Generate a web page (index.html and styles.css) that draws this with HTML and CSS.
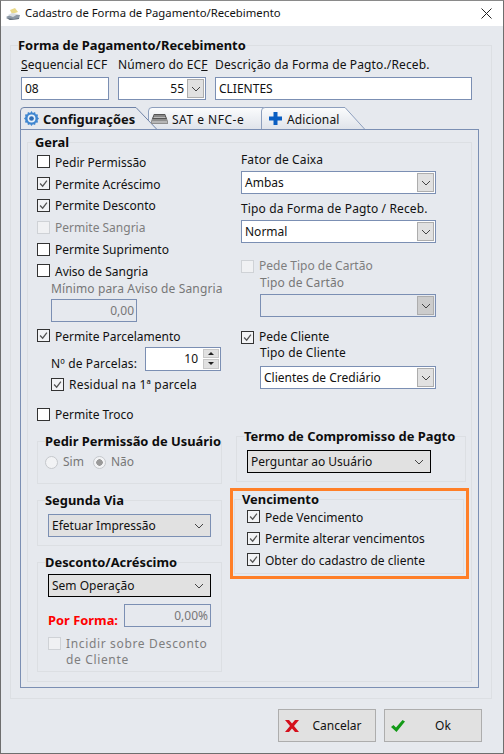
FILE: index.html
```html
<!DOCTYPE html>
<html lang="pt-BR">
<head>
<meta charset="utf-8">
<title>Cadastro de Forma de Pagamento/Recebimento</title>
<link rel="stylesheet" href="styles.css">
</head>
<body>
<svg class="defs" aria-hidden="true">
  <symbol id="chev" viewBox="0 0 12 8"><path d="M2 2l4 4 4-4" fill="none" stroke="currentColor" stroke-width="1"/></symbol>
  <symbol id="tick" viewBox="0 0 13 13"><path d="M2.5 6.5l3 3.2 5-6.5" fill="none" stroke="#555" stroke-width="1.5"/></symbol>
</svg>
<div class="window">
  <div class="titlebar">
    <svg class="appicon" viewBox="0 0 16 14"><path d="M1 10l6-3 8 1-1 4-9 1z" fill="#8d99a6"/><path d="M5 3l5-2 3 4-6 2z" fill="#e9d98a"/><path d="M3 8l4-2 6 1-5 3z" fill="#d8dde2"/><path d="M1 11l8 1 5-1v1l-9 1z" fill="#5d6a78"/></svg>
    <span class="title">Cadastro de Forma de Pagamento/Recebimento</span>
    <svg class="close" viewBox="0 0 11 11"><path d="M.5.5l10 10M10.500.5l-10 10" stroke="#222" stroke-width="1" fill="none"/></svg>
  </div>
  <fieldset class="group outer">
    <legend>Forma de Pagamento/Recebimento</legend>
    <div class="toprow">
      <div class="field w88"><label class="lbl"><u>S</u>equencial ECF</label><div class="input">08</div></div>
      <div class="field w88"><label class="lbl">Número do EC<u>F</u></label>
        <div class="select right"><span class="val">55</span><span class="dd"><svg class="chev"><use href="#chev"/></svg></span></div></div>
      <div class="field w257"><label class="lbl">Descrição da Forma de Pagto./Receb.</label><div class="input">CLIENTES</div></div>
    </div>
    <div class="tabs">
      <svg class="tabshape" viewBox="0 0 346 23" width="346" height="23">
        <defs><linearGradient id="tg" x1="0" y1="0" x2="0" y2="1"><stop offset="0" stop-color="#fbfcfd"/><stop offset="1" stop-color="#dfe3ea"/></linearGradient></defs>
        <path d="M128.500 22.500V4q0-3.500 3.500-3.500h112l21 22z" fill="url(#tg)" stroke="#8d9fbd"/>
        <path d="M241.500 22.500V4q0-3.500 3.500-3.500h80l20 22z" fill="url(#tg)" stroke="#8d9fbd"/>
        <path d="M.5 23V4Q.5.500 4 .500h112l22 22.500z" fill="#e6e9ee"/>
        <path d="M.5 23V4Q.5.500 4 .500h112l21 22" fill="none" stroke="#6f83a8" stroke-width="1"/>
      </svg>
      <div class="tab active tab1">
        <svg class="ticon" viewBox="0 0 16 16"><path d="M8 0l1.500 2 2.300-.9.600 2.400 2.500.3-.4 2.500L16 8l-1.500 1.700.4 2.500-2.500.3-.6 2.400-2.300-.9L8 16l-1.500-2-2.300.9-.6-2.400-2.500-.3.4-2.500L0 8l1.500-1.700-.4-2.500 2.500-.3.6-2.400 2.300.9z" fill="#3f86d0"/><circle cx="8" cy="8" r="4.200" fill="#e8f1fa"/><circle cx="8" cy="8" r="2.500" fill="#2f6db5"/></svg>
        <span>Configurações</span>
      </div>
      <div class="tab tab2">
        <svg class="ticon wide" viewBox="0 0 17 12"><path d="M3 1h11l3 7v3H0V8z" fill="#8f8f8f"/><path d="M3 1h11l2 5H1z" fill="#555"/><path d="M3 3h11M2.500 4.500h12" stroke="#bbb"/><path d="M1 9h15" stroke="#ddd"/></svg>
        <span>SAT e NFC-e</span>
      </div>
      <div class="tab tab3">
        <svg class="ticon" viewBox="0 0 13 13"><path d="M4.500 0h4v4.500H13v4H8.500V13h-4V8.500H0v-4h4.500z" fill="#0a5ec2"/></svg>
        <span>Adicional</span>
      </div>
    </div>
    <div class="panel">
      <fieldset class="group geral">
        <legend>Geral</legend>
        <div class="cols">
          <div class="col left">
            <div class="check first"><span class="box"></span>Pedir Permissão</div>
            <div class="check on"><span class="box"><svg><use href="#tick"/></svg></span>Permite Acréscimo</div>
            <div class="check on"><span class="box"><svg><use href="#tick"/></svg></span>Permite Desconto</div>
            <div class="check off"><span class="box"></span>Permite Sangria</div>
            <div class="check"><span class="box"></span>Permite Suprimento</div>
            <div class="check"><span class="box"></span>Aviso de Sangria</div>
            <div class="lbl dim sub m-min">Mínimo para Aviso de Sangria</div>
            <div class="input disabled sub minimo">0,00</div>
            <div class="check on m3"><span class="box"><svg><use href="#tick"/></svg></span>Permite Parcelamento</div>
            <div class="sub parcelas">
              <span class="lbl parcelas-lbl">Nº de Parcelas:</span>
              <div class="spin"><span class="val">10</span><span class="arrows"><i class="up"></i><i class="down"></i></span></div>
            </div>
            <div class="check on sub m3 residual"><span class="box"><svg><use href="#tick"/></svg></span>Residual na 1ª parcela</div>
            <div class="check m8"><span class="box"></span>Permite Troco</div>
            <fieldset class="group inner m8 h-perm">
              <legend>Pedir Permissão de Usuário</legend>
              <div class="radios dim">
                <span class="radio"></span><span>Sim</span>
                <span class="radio sel"></span><span>Não</span>
              </div>
            </fieldset>
            <fieldset class="group inner m8 h-seg">
              <legend>Segunda Via</legend>
              <div class="select flat m6"><span class="val">Efetuar Impressão</span><svg class="chev"><use href="#chev"/></svg></div>
            </fieldset>
            <fieldset class="group inner m8 h-desc">
              <legend>Desconto/Acréscimo</legend>
              <div class="select flat black m4"><span class="val">Sem Operação</span><svg class="chev"><use href="#chev"/></svg></div>
              <div class="porforma">
                <span class="red">Por Forma:</span>
                <div class="input disabled pct">0,00%</div>
              </div>
              <div class="check off multi"><span class="box"></span><span>Incidir sobre Desconto de Cliente</span></div>
            </fieldset>
          </div>
          <div class="col right-col">
            <div class="lbl indent m1">Fator de Caixa</div>
            <div class="select w195 m4 indent"><span class="val">Ambas</span><span class="dd"><svg class="chev"><use href="#chev"/></svg></span></div>
            <div class="lbl indent m6">Tipo da Forma de Pagto / Receb.</div>
            <div class="select w195 m4 indent"><span class="val">Normal</span><span class="dd"><svg class="chev"><use href="#chev"/></svg></span></div>
            <div class="check off short indent m15"><span class="box"></span>Pede Tipo de Cartão</div>
            <div class="lbl dim indent2">Tipo de Cartão</div>
            <div class="select disabled w176 m4 indent2"><span class="dd"><svg class="chev"><use href="#chev"/></svg></span></div>
            <div class="check on short tight indent m13"><span class="box"><svg><use href="#tick"/></svg></span>Pede Cliente</div>
            <div class="lbl indent2 up1">Tipo de Cliente</div>
            <div class="select w176 m6 indent2"><span class="val">Clientes de Crediário</span><span class="dd"><svg class="chev"><use href="#chev"/></svg></span></div>
            <fieldset class="group inner termo">
              <legend>Termo de Compromisso de Pagto</legend>
              <div class="select flat black m6 w184"><span class="val">Perguntar ao Usuário</span><svg class="chev"><use href="#chev"/></svg></div>
            </fieldset>
            <div class="highlight">
              <fieldset class="group inner venc">
                <legend>Vencimento</legend>
                <div class="check on first-venc"><span class="box"><svg><use href="#tick"/></svg></span>Pede Vencimento</div>
                <div class="check on"><span class="box"><svg><use href="#tick"/></svg></span>Permite alterar vencimentos</div>
                <div class="check on"><span class="box"><svg><use href="#tick"/></svg></span>Obter do cadastro de cliente</div>
              </fieldset>
            </div>
          </div>
        </div>
      </fieldset>
    </div>
  </fieldset>
  <div class="actions">
    <button class="btn"><svg class="bicon" viewBox="0 0 14 12"><path d="M0 0h4l3 3.500L10 0h4L9 6l5 6h-4L7 8.500 4 12H0l5-6z" fill="#d5101c"/></svg><span>Cancelar</span></button>
    <button class="btn"><svg class="bicon" viewBox="0 0 14 12"><path d="M0 7l2.500-2 2.500 2.500L11.500 0 14 1.500 5.500 12z" fill="#139a17"/></svg><span>Ok</span></button>
  </div>
</div>
</body>
</html>
```

FILE: styles.css
```css
* { box-sizing: border-box; }
html, body { margin: 0; padding: 0; }
body {
  width: 504px;
  height: 754px;
  overflow: hidden;
  font-family: "Noto Sans", "DejaVu Sans", sans-serif;
  font-size: 12px;
  line-height: 16px;
  color: #111;
}
.defs { position: absolute; width: 0; height: 0; }
.window {
  width: 504px;
  height: 754px;
  background: #e6e9ee;
  border: 1px solid #6e6e6e;
  border-top-color: #8a8a8a;
}
.titlebar {
  height: 25px;
  background: #fff;
  display: flex;
  align-items: center;
  padding: 0 11px 0 4px;
}
.appicon { width: 16px; height: 14px; margin-right: 4px; }
.title { flex: 1; font-size: 11.3px; padding-bottom: 2px; }
.close { width: 11px; height: 11px; }

.group {
  margin: 0;
  padding: 0;
  border: 1px solid #dcdfe3;
  min-width: 0;
}
.group > legend {
  padding: 0;
  font-size: 12.9px;
  font-weight: 700;
  line-height: 16px;
  height: 16px;
  white-space: nowrap;
  color: #0d0d0d;
}
.outer {
  margin: 11px 0 0 9px;
  width: 482px;
  height: 662px;
  padding: 3px 0 0 10px;
}
.outer > legend { margin-left: -3px; }
.toprow { display: flex; gap: 9px; }
.field { display: flex; flex-direction: column; gap: 5px; }
.w88 { width: 88px; }
.w257 { width: 257px; }
.lbl {
  display: block;
  height: 16px;
  line-height: 18px;
  letter-spacing: .13px;
  white-space: nowrap;
}
.input {
  height: 23px;
  background: #fff;
  border: 1px solid #7b8fb3;
  line-height: 21px;
  padding: 0 3px;
  font-size: 12px;
}
.input.disabled { background: #e6e9ee; color: #777; text-align: right; padding-right: 2px; }
.select {
  display: flex;
  align-items: center;
  justify-content: space-between;
  height: 23px;
  background: #fff;
  border: 1px solid #7b8fb3;
  padding: 0 1px 0 3px;
  line-height: 21px;
}
.select.right .val { flex: 1; text-align: right; padding-right: 3px; }
.select.disabled { background: #e6e9ee; justify-content: flex-end; }
.select.disabled .dd { background: #ccc; color: #999; }
.dd {
  width: 17px;
  height: 19px;
  background: #e1e1e1;
  border: 1px solid #adadad;
  display: flex;
  align-items: center;
  justify-content: center;
  color: #444;
}
.chev { width: 12px; height: 8px; color: #444; }
.select.flat { background: #e1e1e1; padding: 0 5px 0 3px; }
.select.black { border-color: #000; }
.w195 { width: 195px; }
.w176 { width: 176px; }
.w184 { width: 184px; }

.tabs {
  position: relative;
  display: flex;
  height: 23px;
  margin: 7px 0 0 -1px;
}
.tabshape { position: absolute; left: 0; top: 0; }
.tab {
  position: relative;
  display: flex;
  align-items: center;
  height: 23px;
  white-space: nowrap;
}
.tab span { padding-top: 2px; }
.tab1 { width: 128px; padding-left: 4px; font-size: 12.9px; font-weight: 700; }
.tab1 span { padding-top: 0; }
.tab2 { width: 113px; padding-left: 3px; gap: 4px; letter-spacing: .5px; }
.tab3 { padding-left: 8px; gap: 5px; letter-spacing: .1px; }
.tab1 .ticon { margin-right: 4px; }
.ticon { width: 15px; height: 15px; }
.ticon.wide { width: 17px; height: 12px; }
.tab3 .ticon { width: 13px; height: 13px; }

.panel {
  width: 459px;
  height: 559px;
  margin: -1px 0 0 -1px;
  border: 1px solid #7b8fb3;
  padding: 4px 0 0 6px;
  position: relative;
}
.geral {
  width: 445px;
  height: 548px;
  padding-left: 9px;
}
.geral > legend { margin-left: -2px; }
.cols { display: flex; gap: 14px; }
.col { display: flex; flex-direction: column; }
.left { width: 185px; }
.right-col { width: 233px; }

.check {
  display: flex;
  align-items: center;
  gap: 5px;
  height: 21.8px;
  padding-top: 2px;
  white-space: nowrap;
}
.check .box {
  flex: none;
  width: 13px;
  height: 13px;
  margin-top: -2px;
  border: 1px solid #333;
  background: #fff;
  display: block;
}
.check .box svg { display: block; width: 11px; height: 11px; }
.check.on .box { background: #f2f3f5; }
.check.off { color: #7e7e7e; }
.check.off .box { background: #f0f1f3; border-color: #cfd2d6; }
.check.short { height: 16px; line-height: 16px; padding-top: 0; }
.check.short .box { margin-top: 0; }
.check.tight { height: 14px; line-height: 14px; }
.check.first { margin-top: 1px; }
.check.multi {
  align-items: flex-start;
  height: 33px;
  margin-top: 8px;
  padding-top: 0;
  white-space: normal;
  width: 163px;
  letter-spacing: .65px;
}
.check.multi .box { margin-top: 1px; }
.residual { letter-spacing: .2px; }
.dim { color: #777; }
.sub { margin-left: 14px; }
.m-min { margin-top: -2px; }
.minimo { width: 86px; margin-top: 3px; }
.m1 { margin-top: 1px; }
.m3 { margin-top: 3px; }
.m4 { margin-top: 4px; }
.m6 { margin-top: 6px; }
.m7 { margin-top: 7px; }
.m8 { margin-top: 8px; }
.m13 { margin-top: 13px; }
.m15 { margin-top: 15px; }
.parcelas {
  display: flex;
  align-items: flex-start;
  justify-content: space-between;
  height: 24px;
  padding-right: 1px;
}
.parcelas-lbl { margin-top: 8px; }
.spin {
  width: 76px;
  height: 24px;
  background: #fff;
  border: 1px solid #7b8fb3;
  display: flex;
  align-items: center;
  justify-content: flex-end;
  padding-right: 1px;
}
.spin .val { padding-right: 5px; }
.arrows { display: flex; flex-direction: column; width: 16px; height: 20px; gap: 1px; }
.arrows i { flex: 1; background: #e1e1e1; border: 1px solid #c8c8c8; display: flex; align-items: center; justify-content: center; }
.arrows i::after { content: ""; border-left: 3px solid transparent; border-right: 3px solid transparent; }
.up::after { border-bottom: 3px solid #222; }
.down::after { border-top: 3px solid #222; }

.inner { width: 185px; padding: 0 10px; }
.inner > legend { margin-left: -3px; }
.h-perm { height: 51px; }
.h-seg { height: 54px; }
.h-desc { height: 118px; }
.radios { display: flex; align-items: center; height: 16px; margin: 5px 0 0 -3px; }
.radio {
  width: 13px;
  height: 13px;
  border-radius: 50%;
  background: #f2f3f5;
  border: 1px solid #c5c8cc;
  margin-right: 5px;
}
.radio.sel {
  margin-left: 9px;
  background: radial-gradient(circle, #9a9a9a 0 3px, #f2f3f5 3.500px);
}
.porforma { display: flex; align-items: flex-start; justify-content: space-between; margin-top: 7px; }
.red { color: #ff0000; font-size: 12.9px; font-weight: 700; margin-top: 8px; }
.pct { width: 87px; }

.indent { margin-left: 5px; }
.indent2 { margin-left: 24px; }
.up1 { line-height: 17px; }
.termo { width: 230px; margin-top: 39px; height: 54px; }
.highlight {
  width: 239px;
  height: 91px;
  margin: 6px 0 0 -6px;
  border: 3px solid #ff7f27;
  padding-left: 1px;
}
.venc { width: 230px; height: 83px; padding: 0 12px; }
.venc > legend { margin-left: -5px; }
.venc .check { height: 21.5px; }
.first-venc { margin-top: -1px; }

.actions {
  display: flex;
  justify-content: flex-end;
  gap: 8px;
  margin-top: 10px;
  padding-right: 21px;
}
.btn {
  position: relative;
  width: 98px;
  height: 33px;
  background: #e1e1e1;
  border: 1px solid #adadad;
  font: inherit;
  color: #111;
  padding: 0 0 0 20px;
  display: flex;
  align-items: center;
  justify-content: center;
}
.bicon { position: absolute; left: 6px; top: 10px; width: 14px; height: 12px; }
```
